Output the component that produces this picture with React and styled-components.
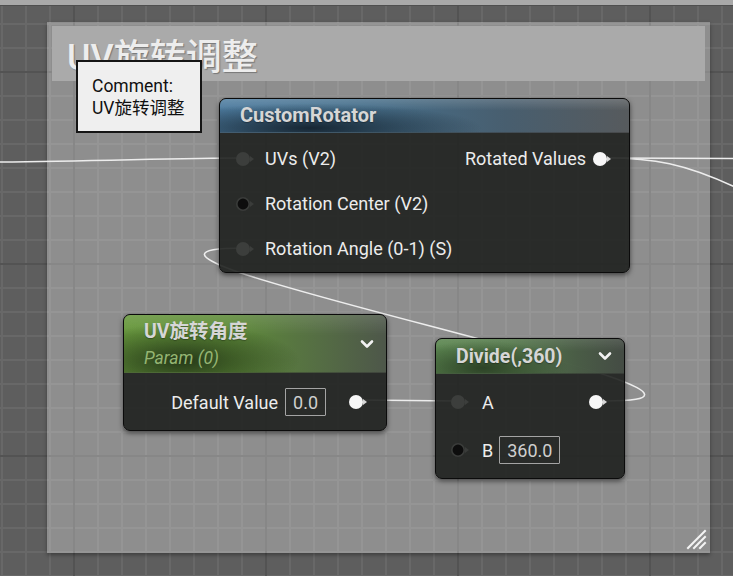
import React from 'react';
import styled, { createGlobalStyle, css } from 'styled-components';

const GlobalStyle = createGlobalStyle`
  html, body {
    margin: 0;
    padding: 0;
    background: #5e5e5e;
    overflow: hidden;
  }
  * {
    box-sizing: border-box;
  }
`;

const FONT = `Roboto, "Noto Sans CJK SC", "Noto Sans", sans-serif`;

const Canvas = styled.div`
  position: relative;
  width: 733px;
  height: 576px;
  overflow: hidden;
  font-family: ${FONT};
  background-color: #5e5e5e;
  background-image:
    linear-gradient(90deg, #535353 2px, transparent 2px),
    linear-gradient(180deg, #535353 2px, transparent 2px),
    linear-gradient(90deg, #686868 2px, transparent 2px),
    linear-gradient(180deg, #686868 2px, transparent 2px);
  background-size: 192px 100%, 100% 192px, 24px 100%, 100% 24px;
  background-position: 73px 0, 0 71px, 1px 0, 0 -1px;
`;

const TopStrip = styled.div`
  position: absolute;
  left: 0;
  top: 0;
  width: 100%;
  height: 6px;
  background: #a9a9a9;
  border-bottom: 1px solid #4f4f4f;
`;

const Comment = styled.div`
  position: absolute;
  left: ${p => p.$x}px;
  top: ${p => p.$y}px;
  width: ${p => p.$w}px;
  height: ${p => p.$h}px;
  padding: 4px 5px;
  background: rgba(255, 255, 255, 0.3);
  box-shadow: 0 2px 4px rgba(0, 0, 0, 0.35);
`;

const CommentHeader = styled.div`
  height: 55px;
  display: flex;
  align-items: center;
  padding: 0 0 0 15px;
  background: #aaaaaa;
  color: #ededed;
  font-size: 36px;
  font-weight: 500;
  text-shadow: 1px 1px 1px rgba(0, 0, 0, 0.3);
`;

const ResizeGrip = styled.svg`
  position: absolute;
  right: 3px;
  bottom: 3px;
`;

const Tooltip = styled.div`
  position: absolute;
  left: 76px;
  top: 60px;
  width: 126px;
  height: 73px;
  padding: 13px 0 0 14px;
  background: #efefef;
  border: 2px solid #151515;
  color: #111;
  font-size: 17.5px;
  line-height: 22px;
  z-index: 5;
`;

const Wires = styled.svg`
  position: absolute;
  left: 0;
  top: 0;
`;

const Node = styled.div`
  position: absolute;
  left: ${p => p.$x}px;
  top: ${p => p.$y}px;
  width: ${p => p.$w}px;
  height: ${p => p.$h}px;
  display: flex;
  flex-direction: column;
  border: 1px solid #0b0b0b;
  border-radius: 7px;
  overflow: hidden;
  background: rgba(30, 32, 30, 0.9);
  box-shadow: 0 2px 5px rgba(0, 0, 0, 0.55);
`;

const headerThemes = {
  blue: css`
    background:
      linear-gradient(180deg, rgba(255, 255, 255, 0.16) 0%, rgba(255, 255, 255, 0) 35%),
      radial-gradient(ellipse 42% 75% at 22% 88%, rgba(20, 34, 46, 0.95) 0%, rgba(20, 34, 46, 0) 100%),
      linear-gradient(90deg, rgba(80, 130, 168, 0.93) 0%, rgba(72, 116, 146, 0.93) 35%, rgba(74, 98, 116, 0.93) 70%, rgba(90, 94, 97, 0.93) 100%);
  `,
  green: css`
    background:
      linear-gradient(180deg, rgba(255, 255, 255, 0.12) 0%, rgba(255, 255, 255, 0) 35%),
      radial-gradient(ellipse 45% 65% at 22% 80%, rgba(34, 52, 22, 0.95) 0%, rgba(34, 52, 22, 0) 100%),
      linear-gradient(90deg, rgba(108, 160, 62, 0.93) 0%, rgba(98, 146, 58, 0.93) 40%, rgba(88, 114, 70, 0.93) 75%, rgba(80, 90, 76, 0.93) 100%);
  `,
  moss: css`
    background:
      linear-gradient(180deg, rgba(255, 255, 255, 0.1) 0%, rgba(255, 255, 255, 0) 35%),
      radial-gradient(ellipse 45% 80% at 25% 85%, rgba(40, 60, 34, 0.9) 0%, rgba(40, 60, 34, 0) 100%),
      linear-gradient(90deg, rgba(96, 142, 84, 0.93) 0%, rgba(88, 126, 78, 0.93) 40%, rgba(76, 96, 72, 0.93) 75%, rgba(70, 78, 70, 0.93) 100%);
  `,
};

const NodeHeader = styled.div`
  position: relative;
  height: ${p => p.$h}px;
  flex: none;
  display: flex;
  flex-direction: column;
  justify-content: center;
  padding-left: ${p => p.$pad}px;
  border-bottom: 1px solid rgba(0, 0, 0, 0.35);
  ${p => headerThemes[p.$theme]}
`;

const NodeTitle = styled.div`
  color: #d6d6d6;
  font-size: ${p => p.$size || 19.5}px;
  font-weight: 700;
  line-height: 23px;
  text-shadow: 0 1px 1px rgba(0, 0, 0, 0.3);
`;

const NodeSubtitle = styled.div`
  margin-top: 5px;
  color: #95b573;
  font-size: 17.5px;
  font-style: italic;
  line-height: 20px;
`;

const Chevron = styled.svg`
  position: absolute;
  right: ${p => p.$right}px;
  top: 50%;
  margin-top: -6px;
`;

const NodeBody = styled.div`
  flex: 1;
  display: flex;
  flex-direction: column;
  padding: ${p => p.$pad};
`;

const Row = styled.div`
  height: ${p => p.$h}px;
  display: flex;
  align-items: center;
  justify-content: ${p => (p.$end ? 'flex-end' : 'space-between')};
  padding: 0 ${p => p.$right}px 0 ${p => p.$left}px;
`;

const PinGroup = styled.div`
  display: flex;
  align-items: center;
  gap: ${p => p.$gap}px;
  margin-left: ${p => p.$push || 0}px;
`;

const Label = styled.span`
  color: #ececec;
  font-size: 18px;
  white-space: nowrap;
`;

const ValueBox = styled.span`
  display: inline-flex;
  align-items: center;
  height: 28px;
  padding: 0 7px;
  border: 1px solid #a4a4a4;
  border-radius: 1px;
  color: #cfcfcf;
  font-size: 18px;
`;

const pinColors = {
  dim: { fill: '#3c3e3c', arrow: '#3c3e3c', stroke: 'none' },
  hollow: { fill: '#0d0d0d', arrow: '#3a3c3a', stroke: '#3a3c3a' },
  white: { fill: '#f7f7f7', arrow: '#d8d8d8', stroke: 'none' },
};

function Pin({ kind }) {
  const c = pinColors[kind];
  return (
    <svg width="20" height="16" viewBox="0 0 20 16">
      <circle cx="8" cy="8" r={c.stroke === 'none' ? 7 : 6.2} fill={c.fill} stroke={c.stroke} strokeWidth="1.6" />
      <path d="M15 5 L19 8 L15 11 Z" fill={c.arrow} />
    </svg>
  );
}

function ChevronIcon({ right }) {
  return (
    <Chevron $right={right} width="14" height="12" viewBox="0 0 14 12">
      <polyline points="2,3.5 7,8.5 12,3.5" fill="none" stroke="#f2f2f2" strokeWidth="2.6" strokeLinecap="round" strokeLinejoin="round" />
    </Chevron>
  );
}

export default function App() {
  return (
    <>
      <GlobalStyle />
      <Canvas>
        <TopStrip />

        <Comment $x={47} $y={22} $w={663} $h={531}>
          <CommentHeader>UV旋转调整</CommentHeader>
          <ResizeGrip width="21" height="21" viewBox="0 0 21 21">
            <g stroke="#f4f4f4" strokeWidth="2" strokeLinecap="square">
              <line x1="2" y1="19" x2="19" y2="2" />
              <line x1="8" y1="19" x2="19" y2="8" />
              <line x1="14" y1="19" x2="19" y2="14" />
            </g>
          </ResizeGrip>
        </Comment>

        <Wires width="733" height="576" viewBox="0 0 733 576">
          <g fill="none" stroke="#ededed" strokeWidth="1.6">
            <path d="M0 162 C 100 161 180 158 242 158" />
            <path d="M606 158 L733 158.5" />
            <path d="M606 158 C 650 158 685 162 745 192" />
            <path d="M606 401 C 826 401 23 248 243 248" />
            <path d="M360 400 L458 401" />
          </g>
        </Wires>

        <Node $x={219} $y={98} $w={411} $h={175}>
          <NodeHeader $h={34} $pad={20} $theme="blue">
            <NodeTitle $size={20}>CustomRotator</NodeTitle>
          </NodeHeader>
          <NodeBody $pad="3px 0 0">
            <Row $h={45} $left={15} $right={17}>
              <PinGroup $gap={10}>
                <Pin kind="dim" />
                <Label>UVs (V2)</Label>
              </PinGroup>
              <PinGroup $gap={6}>
                <Label>Rotated Values</Label>
                <Pin kind="white" />
              </PinGroup>
            </Row>
            <Row $h={45} $left={15} $right={17}>
              <PinGroup $gap={10}>
                <Pin kind="hollow" />
                <Label>Rotation Center (V2)</Label>
              </PinGroup>
            </Row>
            <Row $h={45} $left={15} $right={17}>
              <PinGroup $gap={10}>
                <Pin kind="dim" />
                <Label>Rotation Angle (0-1) (S)</Label>
              </PinGroup>
            </Row>
          </NodeBody>
        </Node>

        <Node $x={123} $y={314} $w={264} $h={117}>
          <NodeHeader $h={58} $pad={20} $theme="green">
            <NodeTitle $size={19.5}>UV旋转角度</NodeTitle>
            <NodeSubtitle>Param (0)</NodeSubtitle>
            <ChevronIcon right={12} />
          </NodeHeader>
          <NodeBody $pad="0">
            <Row $h={58} $left={0} $right={18} $end>
              <PinGroup $gap={7}>
                <Label>Default Value</Label>
                <ValueBox>0.0</ValueBox>
              </PinGroup>
              <PinGroup $gap={0} $push={22}>
                <Pin kind="white" />
              </PinGroup>
            </Row>
          </NodeBody>
        </Node>

        <Node $x={435} $y={338} $w={190} $h={141}>
          <NodeHeader $h={35} $pad={20} $theme="moss">
            <NodeTitle $size={19.5}>Divide(,360)</NodeTitle>
            <ChevronIcon right={12} />
          </NodeHeader>
          <NodeBody $pad="4px 0 6px">
            <Row $h={48} $left={14} $right={16}>
              <PinGroup $gap={12}>
                <Pin kind="dim" />
                <Label>A</Label>
              </PinGroup>
              <Pin kind="white" />
            </Row>
            <Row $h={48} $left={14} $right={16}>
              <PinGroup $gap={12}>
                <Pin kind="hollow" />
                <PinGroup $gap={6}>
                  <Label>B</Label>
                  <ValueBox>360.0</ValueBox>
                </PinGroup>
              </PinGroup>
            </Row>
          </NodeBody>
        </Node>

        <Tooltip>
          Comment:
          <br />
          UV旋转调整
        </Tooltip>
      </Canvas>
    </>
  );
}
